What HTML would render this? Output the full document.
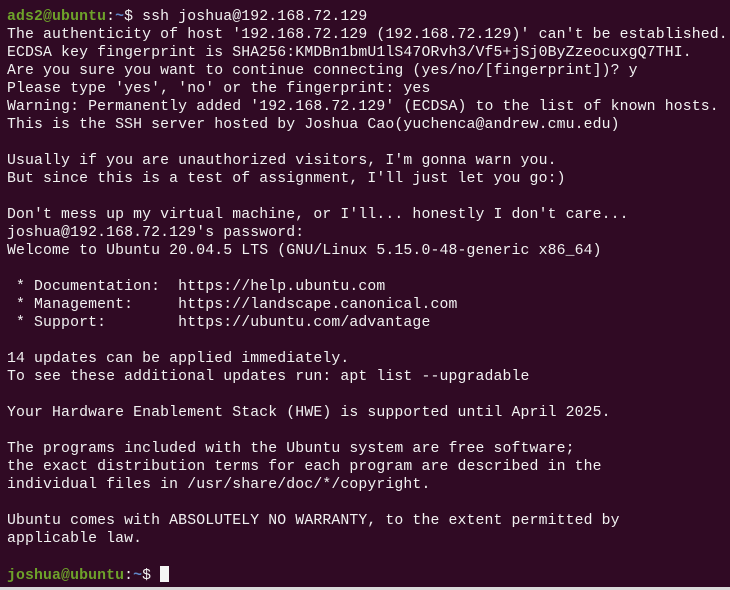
<!DOCTYPE html>
<html><head><style>
html,body{margin:0;padding:0;}
body{width:730px;height:590px;background:#300a24;overflow:hidden;position:relative;}
pre{margin:0;position:absolute;left:7px;top:8px;font-family:"Liberation Mono",monospace;font-size:14.8px;letter-spacing:0.13px;line-height:18px;color:#f2f2f2;white-space:pre;}
.g{color:#6ea22a;font-weight:bold}
.b{color:#5f87c7;font-weight:bold}
.cur{display:inline-block;width:9px;height:16px;background:#f5f5f5;vertical-align:-3px}
.bar{position:absolute;left:0;right:0;bottom:0;height:3px;background:#d9d9d9}
</style></head><body>
<pre><span class="g">ads2@ubuntu</span>:<span class="b">~</span>$ ssh joshua@192.168.72.129
The authenticity of host '192.168.72.129 (192.168.72.129)' can't be established.
ECDSA key fingerprint is SHA256:KMDBn1bmU1lS47ORvh3/Vf5+jSj0ByZzeocuxgQ7THI.
Are you sure you want to continue connecting (yes/no/[fingerprint])? y
Please type 'yes', 'no' or the fingerprint: yes
Warning: Permanently added '192.168.72.129' (ECDSA) to the list of known hosts.
This is the SSH server hosted by Joshua Cao(yuchenca@andrew.cmu.edu)

Usually if you are unauthorized visitors, I'm gonna warn you.
But since this is a test of assignment, I'll just let you go:)

Don't mess up my virtual machine, or I'll... honestly I don't care...
joshua@192.168.72.129's password:
Welcome to Ubuntu 20.04.5 LTS (GNU/Linux 5.15.0-48-generic x86_64)

 * Documentation:  https://help.ubuntu.com
 * Management:     https://landscape.canonical.com
 * Support:        https://ubuntu.com/advantage

14 updates can be applied immediately.
To see these additional updates run: apt list --upgradable

Your Hardware Enablement Stack (HWE) is supported until April 2025.

The programs included with the Ubuntu system are free software;
the exact distribution terms for each program are described in the
individual files in /usr/share/doc/*/copyright.

Ubuntu comes with ABSOLUTELY NO WARRANTY, to the extent permitted by
applicable law.

<span class="g">joshua@ubuntu</span>:<span class="b">~</span>$ <span class="cur"></span></pre>
<div class="bar"></div>
</body></html>
